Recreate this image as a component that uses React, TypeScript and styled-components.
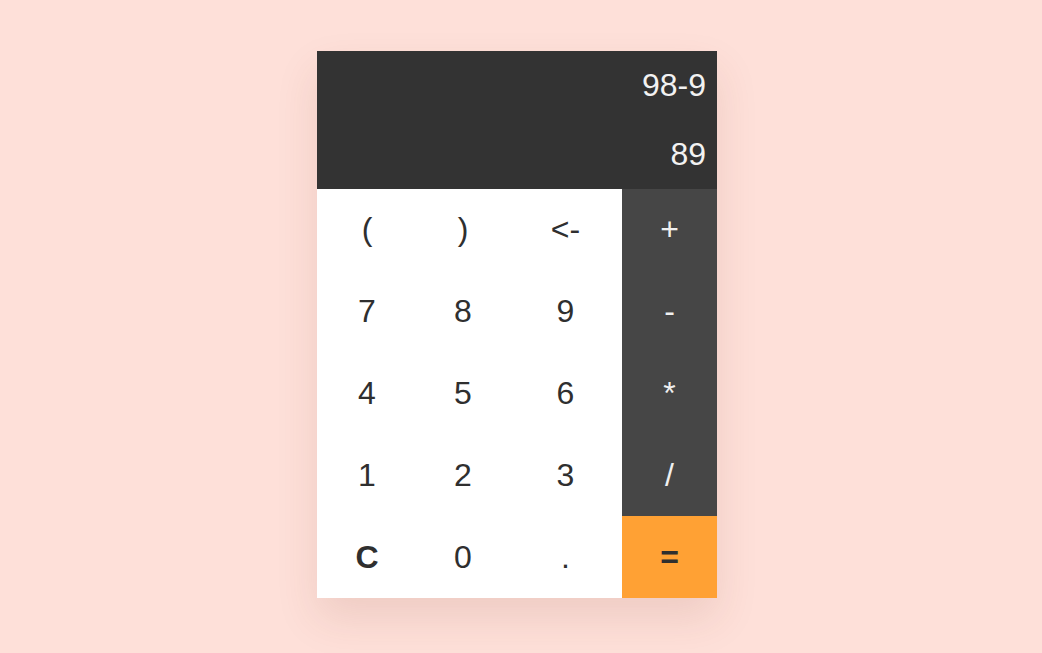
import React from "react";
import styled, { createGlobalStyle } from "styled-components";

const Global = createGlobalStyle`
  html, body { margin: 0; padding: 0; }
  body {
    background: #fee0d9;
    font-family: "Liberation Sans", Arial, sans-serif;
    width: 1042px;
    height: 653px;
    overflow: hidden;
  }
`;

const Page = styled.div`
  display: flex;
  justify-content: center;
  padding-top: 51px;
  padding-right: 8px;
`;

const Calculator = styled.div`
  width: 400px;
  background: #fff;
  box-shadow: 0 20px 40px rgba(120, 60, 40, 0.12);
  display: flex;
  flex-direction: column;
`;

const Display = styled.div`
  height: 138px;
  background: #333333;
  display: grid;
  grid-template-rows: 1fr 1fr;
  padding-right: 11px;
`;

const DisplayLine = styled.div`
  display: flex;
  align-items: center;
  justify-content: flex-end;
  color: #f2f2f2;
  font-size: 32px;
  line-height: 1;
  padding-bottom: 2px;
`;

const Keys = styled.div`
  display: grid;
  grid-template-columns: 100px 92px 113px 95px;
  grid-template-rows: repeat(5, 1fr);
  height: 409px;
`;

type Variant = "num" | "op" | "eq";

const Key = styled.button<{ $variant: Variant; $bold?: boolean }>`
  border: none;
  margin: 0;
  padding: 0;
  font-family: "Liberation Sans", Arial, sans-serif;
  font-size: 32px;
  font-weight: ${(p) => (p.$bold ? 700 : 400)};
  display: flex;
  align-items: center;
  justify-content: center;
  cursor: pointer;
  background: ${(p) =>
    p.$variant === "op" ? "#464646" : p.$variant === "eq" ? "#ffa134" : "#ffffff"};
  color: ${(p) => (p.$variant === "op" ? "#f0f0f0" : "#2f2f2f")};
`;

const rows: { label: string; variant: Variant; bold?: boolean }[][] = [
  [
    { label: "(", variant: "num" },
    { label: ")", variant: "num" },
    { label: "<-", variant: "num" },
    { label: "+", variant: "op" },
  ],
  [
    { label: "7", variant: "num" },
    { label: "8", variant: "num" },
    { label: "9", variant: "num" },
    { label: "-", variant: "op" },
  ],
  [
    { label: "4", variant: "num" },
    { label: "5", variant: "num" },
    { label: "6", variant: "num" },
    { label: "*", variant: "op" },
  ],
  [
    { label: "1", variant: "num" },
    { label: "2", variant: "num" },
    { label: "3", variant: "num" },
    { label: "/", variant: "op" },
  ],
  [
    { label: "C", variant: "num", bold: true },
    { label: "0", variant: "num" },
    { label: ".", variant: "num" },
    { label: "=", variant: "eq", bold: true },
  ],
];

export default function App() {
  return (
    <>
      <Global />
      <Page>
        <Calculator>
          <Display>
            <DisplayLine>98-9</DisplayLine>
            <DisplayLine>89</DisplayLine>
          </Display>
          <Keys>
            {rows.flat().map((k, i) => (
              <Key key={i} $variant={k.variant} $bold={k.bold}>
                {k.label}
              </Key>
            ))}
          </Keys>
        </Calculator>
      </Page>
    </>
  );
}
